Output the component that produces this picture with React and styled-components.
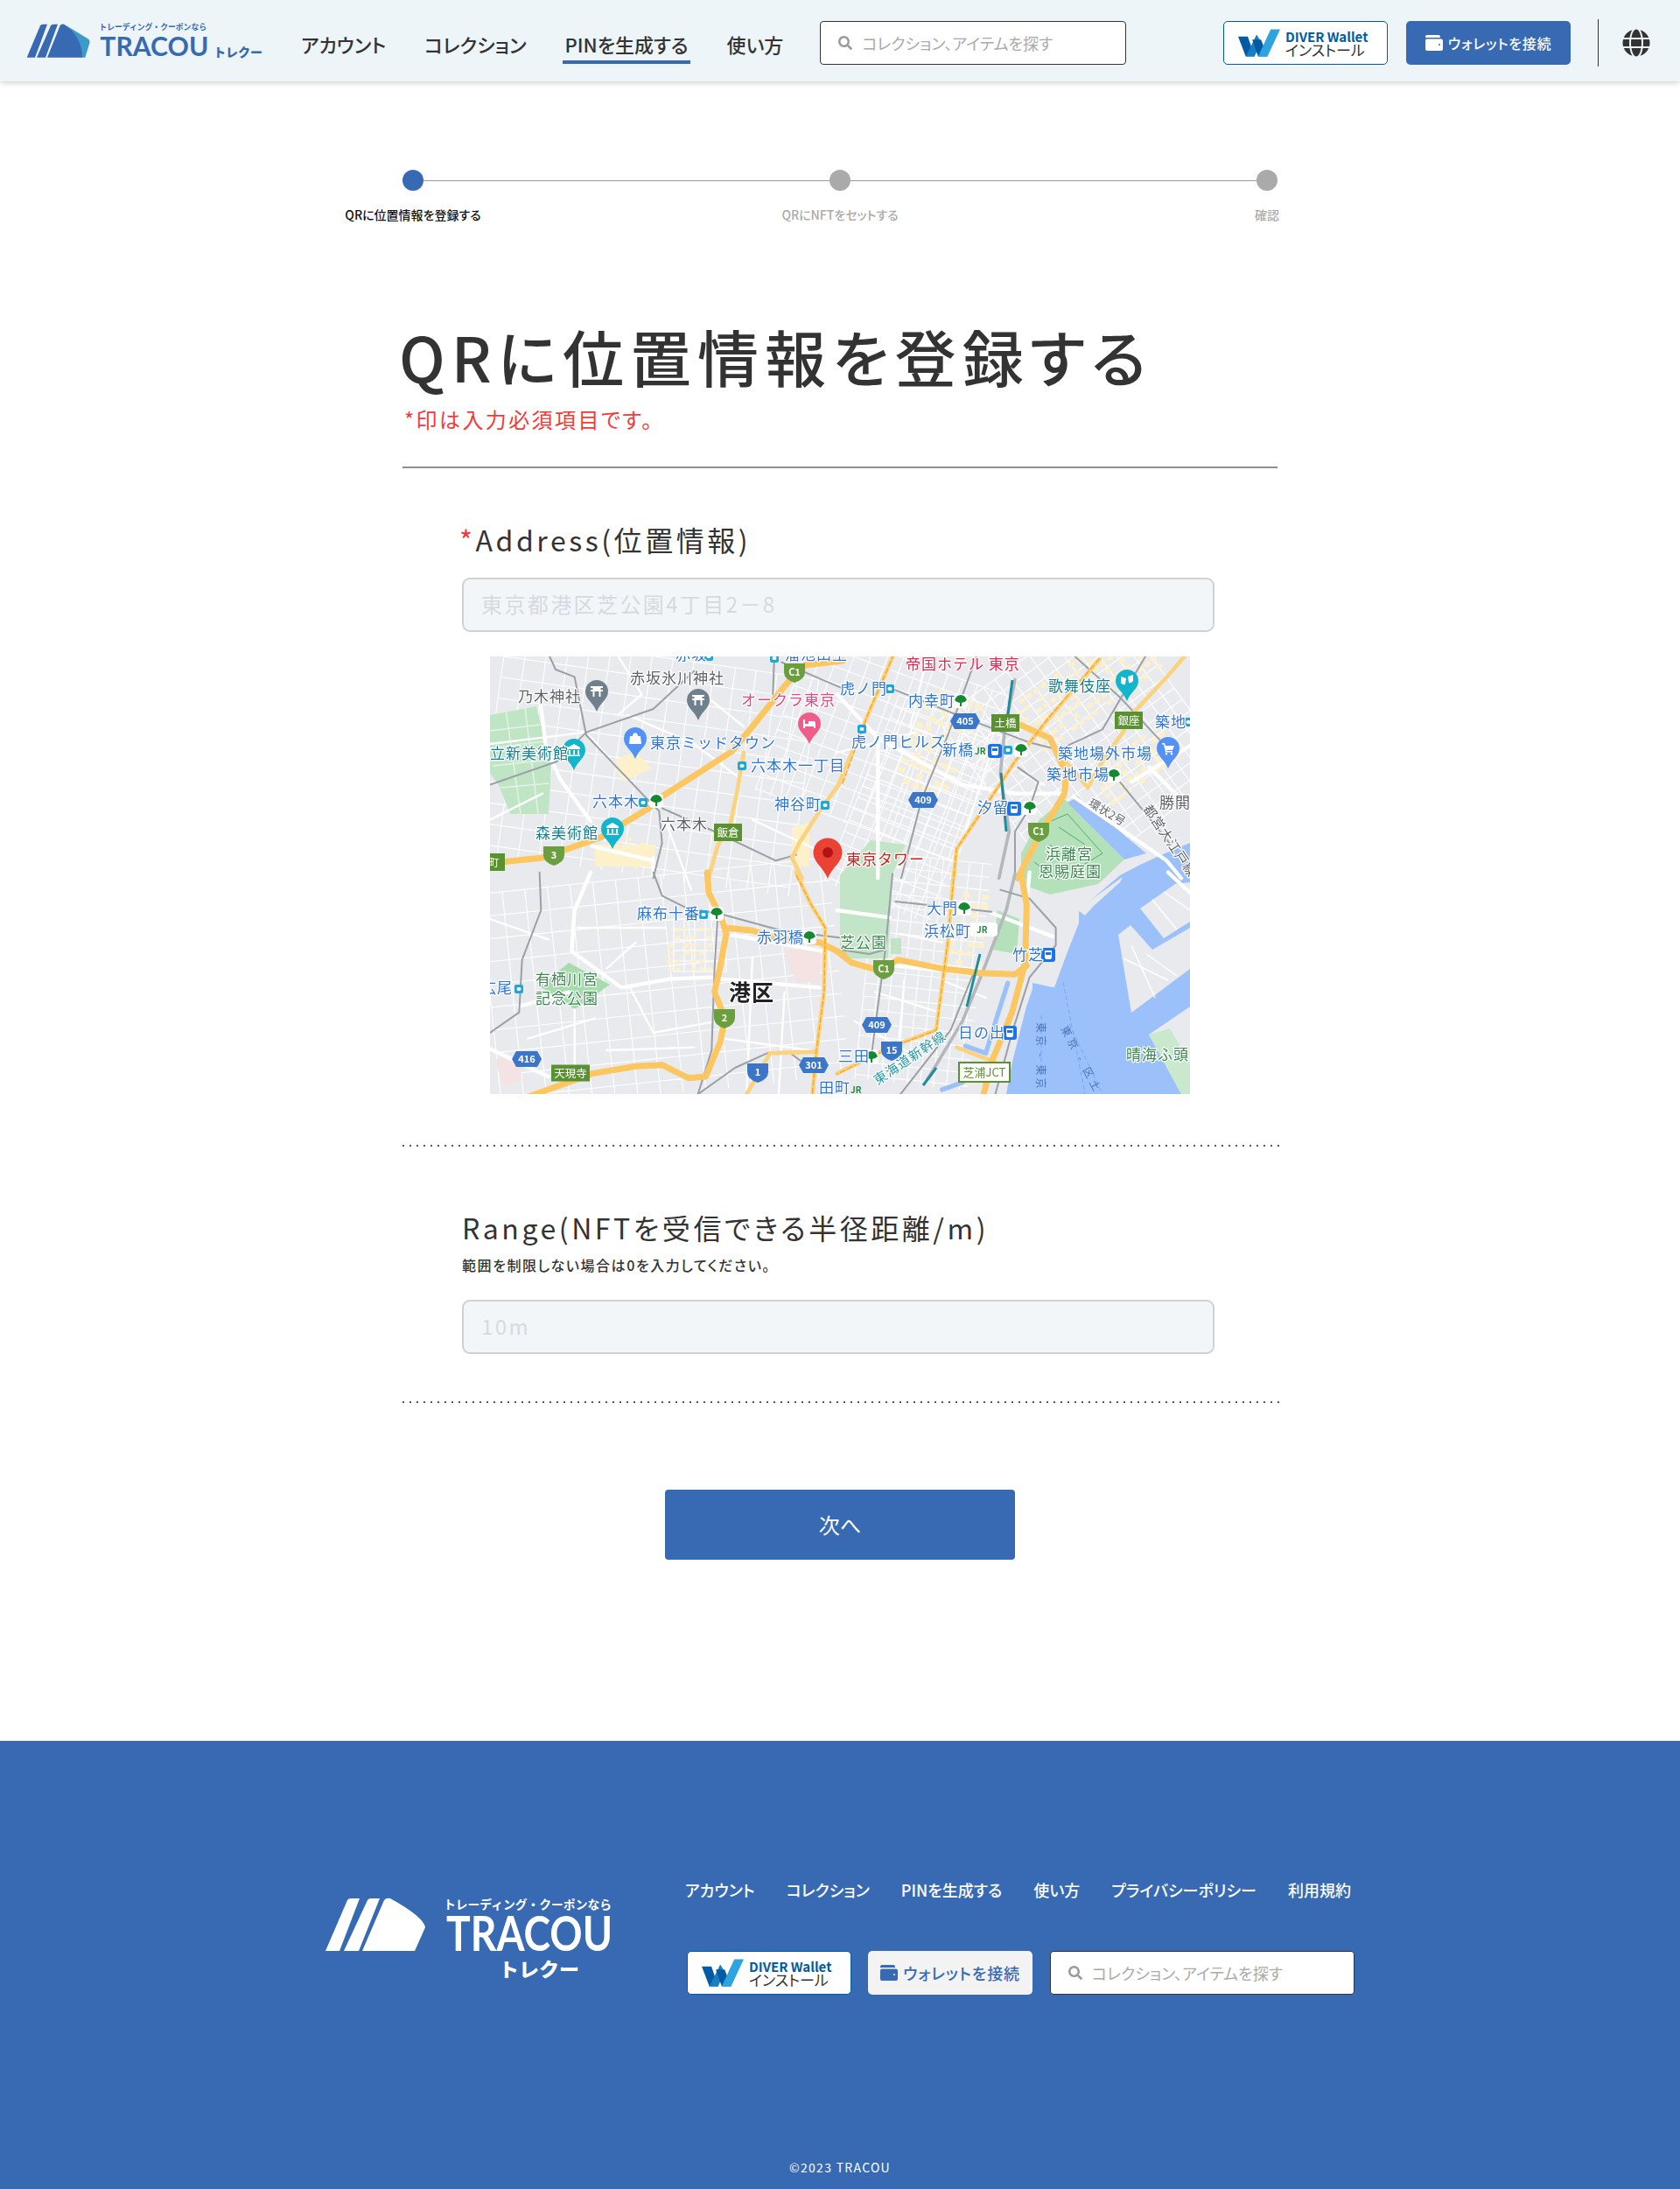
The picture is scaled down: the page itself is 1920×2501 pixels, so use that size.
import React from "react";
import styled, { createGlobalStyle } from "styled-components";
import { FaGlobe, FaSearch } from "react-icons/fa";

const NAV = ["アカウント", "コレクション", "PINを生成する", "使い方"];
const FOOTER_NAV = [...NAV, "プライバシーポリシー", "利用規約"];
const SEARCH_TEXT = "コレクション、アイテムを探す";

const BLUE = "#386ab3";

/* ---------- logos ---------- */

const HeaderLogo = () => (
  <LogoSvg width="300" height="65" viewBox="0 0 900 195">
    <path d="M165 44 L240 90 Q250 96 247 106 L232 155 L218 155 C220 110 205 80 165 44Z" fill="#3b9ac9" />
    <path d="M32 155 L78 46 Q81 41 87 41 L102 41 L60 155Z" fill={BLUE} />
    <path d="M66 155 L114 46 Q117 41 123 41 L138 41 L96 155Z" fill={BLUE} />
    <path d="M102 155 L146 46 Q150 38 160 41 Q222 84 222 155Z" fill={BLUE} />
    <text x="280" y="60" fontSize="29" fontWeight="700" fill={BLUE} textLength="368" lengthAdjust="spacingAndGlyphs">
      トレーディング・クーポンなら
    </text>
    <text x="283" y="150" fontSize="92" fontWeight="700" fill={BLUE} textLength="372" lengthAdjust="spacingAndGlyphs" fontFamily="Lato">
      TRACOU
    </text>
    <text x="672" y="152" fontSize="42" fontWeight="900" fill={BLUE} textLength="168" lengthAdjust="spacingAndGlyphs">
      トレクー
    </text>
  </LogoSvg>
);

const FooterLogo = () => (
  <LogoSvg width="330" height="100" viewBox="0 0 330 100">
    <g fill="#fff">
      <path d="M0 65 L25 7 Q26 5 29 5 L39 5 L16 65Z" />
      <path d="M21 65 L48 7 Q49 5 52 5 L62 5 L38 65Z" />
      <path d="M42 65 L67 7 Q69 4 74 5 Q112 26 114 38 L102 65Z" />
      <text x="135" y="17" fontSize="14" fontWeight="700" textLength="192" lengthAdjust="spacingAndGlyphs">
        トレーディング・クーポンなら
      </text>
      <text x="138" y="65" fontSize="56" fontWeight="700" textLength="190" lengthAdjust="spacingAndGlyphs" fontFamily="Lato">
        TRACOU
      </text>
      <text x="198" y="94" fontSize="22" fontWeight="900" textLength="92" lengthAdjust="spacingAndGlyphs">
        トレクー
      </text>
    </g>
  </LogoSvg>
);

const DiverMark = () => (
  <svg width="48" height="32" viewBox="0 0 143 93">
    <path d="M0 25 H33 L56 93 H26Z" fill="#005ba4" />
    <path d="M26 93 H56 L78 43 L63 18Z" fill="#1a7cc1" />
    <path d="M48 35 H78 L100 93 H68Z" fill="#005ba4" />
    <path d="M68 93 H100 L143 0 H111Z" fill="#2ea3e0" />
  </svg>
);

const WalletIcon = () => (
  <svg width="20" height="18" viewBox="0 0 20 18" fill="currentColor">
    <path d="M2 0h13a2 2 0 0 1 2 2v1H0V2a2 2 0 0 1 2-2Z" />
    <path
      fillRule="evenodd"
      d="M2 4.5h16a2 2 0 0 1 2 2V16a2 2 0 0 1-2 2H2a2 2 0 0 1-2-2V6.5a2 2 0 0 1 2-2Z M15 11a1 1 0 1 0 2 0 1 1 0 1 0-2 0Z"
    />
  </svg>
);

/* ---------- map ---------- */

// roads are written in 3x coordinates of each quarter of the map
const ROADS = {
  main: { stroke: "#fff", w: 13 },
  side: { stroke: "#fff", w: 7 },
  hw: { stroke: "#fcc660", w: 21 },
  gold: { stroke: "#fbd27e", w: 14 },
  rail: { stroke: "#9aa0a6", w: 6 },
  track: { stroke: "#b4b8bc", w: 11 },
  canal: { stroke: "#9cc0f9", w: 16 },
};

const QUARTERS = [
  {
    at: [0, 0],
    roads: [
      ["main", "M170 130 L190 300 L240 420 L345 565"],
      ["main", "M560 690 L560 750"],
      ["main", "M350 650 L560 700"],
      ["side", "M0 300 L330 260 M340 270 L470 420 M700 300 L860 420 M470 200 L700 300 M600 560 L690 800"],
      ["side", "M0 560 L180 470 M720 120 L870 240 M440 0 L520 130 L440 200 M900 560 L1200 700"],
      ["rail", "M200 -10 L225 45 L290 70 L330 270 L540 490 L580 530 L590 640 L560 760"],
      ["rail", "M0 440 L230 360 L330 260 L560 180 L700 50"],
      ["rail", "M590 520 L770 600 L980 700 L1050 680"],
      ["rail", "M975 -5 L970 130 M1000 20 L1210 110"],
      ["gold", "M1210 420 L1130 530 L1060 640 L1035 690 L1070 760"],
      ["gold", "M870 330 L850 450 L825 570 L780 650 L750 760"],
      ["hw", "M-10 710 L180 690 L380 620 L545 520 L590 480 L830 325 L900 240 L1020 90 L1080 30 L1210 15"],
    ],
  },
  {
    at: [400, 0],
    roads: [
      ["main", "M-10 130 L130 280 L420 440 L600 470 L780 470"],
      ["main", "M800 480 L1120 700 L1170 760"],
      ["main", "M130 300 L130 760 M1000 430 L1210 300 M1060 380 L1210 530"],
      ["side", "M-10 330 L260 260 M300 0 L240 240 M520 320 L380 760 M620 400 L700 440"],
      ["track", "M600 80 L565 250 L550 400 L580 600 L545 760"],
      ["rail", "M470 -5 L370 270 L280 490 L210 760"],
      ["rail", "M190 115 L400 200 L650 295 L750 320 L900 250 L1050 -5"],
      ["rail", "M800 -5 L960 140 L1100 290 M960 430 L1130 640"],
      ["rail", "M610 380 L680 430 L650 520 L600 600 L600 760"],
      ["gold", "M185 -10 L100 190 L-10 450"],
      ["gold", "M890 10 L710 220 L600 360 L500 510 L400 660 L390 760"],
      ["gold", "M740 320 L850 450 L900 360 L970 260 L1000 200 L1130 60 L1185 -5"],
      ["hw", "M620 235 L720 280 L775 400 L770 470 L680 620 L610 760"],
    ],
  },
  {
    at: [0, 250],
    roads: [
      ["main", "M345 -10 L290 120 L280 260 L450 385 L620 355 L760 350"],
      ["main", "M790 355 L1130 385 M830 205 L1140 260 M-10 590 L200 690 M100 450 L270 400"],
      ["side", "M0 150 L200 220 M300 180 L600 180 M480 385 L560 540 M560 540 L780 500 M130 560 L360 490 M500 230 L400 320"],
      ["side", "M900 280 L880 750 M1010 400 L990 750 M800 560 L1100 600 M400 600 L700 590 M290 680 L290 460"],
      ["rail", "M170 -10 L175 120 L110 290 L100 470 L0 540"],
      ["rail", "M560 -10 L590 70 L680 115 L780 130 L1000 190 L1210 215"],
      ["rail", "M780 150 L770 320 L760 600 L710 760 M700 760 L840 660 L950 610 L1030 610 L1070 640"],
      ["gold", "M1050 -10 L1100 100 L1150 180 L1145 400 L1120 600 L1105 760"],
      ["gold", "M960 610 L1120 605 M960 610 L880 750"],
      ["hw", "M745 -10 L750 60 L795 150 L810 200 L790 310 L770 400 L805 490 L790 570 L740 690 L680 695 L590 650 L500 655 L350 680 L130 760"],
      ["hw", "M810 180 L900 190 L1000 220 L1130 230 L1210 270"],
    ],
  },
  {
    at: [400, 250],
    roads: [
      ["main", "M-10 120 L170 145 M190 310 L480 340 M520 130 L730 210 M650 -10 L640 100"],
      ["side", "M200 200 L350 230 M120 400 L340 470 M50 500 L260 620 M350 360 L500 420 M220 360 L200 650"],
      ["main", "M1125 -10 L1200 60"],
      ["canal", "M575 370 L540 480 L500 610 L430 585 M420 710 L350 735"],
      ["track", "M600 -5 L570 120 L490 330 L420 500 L300 700"],
      ["rail", "M180 -5 L155 260 L110 600"],
      ["rail", "M190 90 L520 125 M550 50 L650 80 L740 180 L740 240 L650 350 L590 540 L530 760"],
      ["rail", "M0 255 L100 270 L155 255 M460 330 L380 530 L200 760"],
      ["gold", "M390 -10 L370 230 L330 530 L170 590 L-10 680"],
      ["gold", "M400 590 L530 640"],
      ["hw", "M-10 260 L40 300 L130 325 L200 290 L350 320 L480 335 L600 340 L640 310"],
      ["hw", "M620 -10 L640 100 L635 300 L590 470 L520 640 L490 760"],
    ],
  },
];

const GRIDS = [
  [0, 0, 360, 250, 24, 8],
  [0, 250, 400, 250, 26, -6],
  [330, 0, 240, 200, 18, 20],
  [420, 60, 130, 230, 14, 22],
  [430, 230, 130, 260, 15, 6],
  [560, -20, 240, 240, 16, -36],
  [210, 300, 60, 60, 12, 0],
];

const YELLOW_BLOCKS = [
  [203, 310, 54, 50, 9, 0],
  [600, 0, 170, 70, 10, -36],
  [480, 40, 60, 120, 11, 22],
  [525, 270, 35, 90, 11, 6],
  [690, 100, 100, 50, 10, -36],
  [150, 210, 30, 30, 9, 20],
  [420, 250, 32, 40, 10, 6],
];

const Lines = ({ x, y, w, h, s, r }) => {
  const items = [];
  for (let i = x; i <= x + w; i += s) items.push(<line key={`v${i}`} x1={i} y1={y} x2={i} y2={y + h} />);
  for (let j = y; j <= y + h; j += s) items.push(<line key={`h${j}`} x1={x} y1={j} x2={x + w} y2={j} />);
  return <g transform={`rotate(${r} ${x + w / 2} ${y + h / 2})`}>{items}</g>;
};

const Blocks = ({ x, y, w, h, s, r }) => {
  const items = [];
  for (let i = x; i < x + w; i += s)
    for (let j = y; j < y + h; j += s)
      if ((i + j * 3) % 7 < 5) items.push(<rect key={`${i}-${j}`} x={i} y={j} width={s - 3} height={s - 5} />);
  return <g transform={`rotate(${r} ${x + w / 2} ${y + h / 2})`}>{items}</g>;
};

const teardrop = (r, h) =>
  `M0 ${h} C${-r * 0.3} ${h * 0.55} ${-r} ${r * 0.7} ${-r} 0 A${r} ${r} 0 1 1 ${r} 0 C${r} ${r * 0.7} ${r * 0.3} ${h * 0.55} 0 ${h}Z`;

const PIN_ICONS = {
  torii: <path d="M-7 -6 H7 V-4 H4.5 V-2 H7 V0 H4.5 V6 H2.5 V0 H-2.5 V6 H-4.5 V0 H-7 V-2 H-4.5 V-4 H-7Z" fill="#fff" />,
  museum: <path d="M0 -7 L7 -3 V-1 H-7 V-3Z M-6 0 H-4 V5 H-6Z M-1 0 H1 V5 H-1Z M4 0 H6 V5 H4Z M-7 5.5 H7 V7 H-7Z" fill="#fff" />,
  bag: <path d="M-6 -3 H-3 C-3 -8 3 -8 3 -3 H6 L7 6 H-7Z" fill="#fff" />,
  bed: <path d="M-7 -5 H-5 V0 H-1 V-3 H5 Q7 -3 7 0 V5 H5 V3 H-5 V5 H-7Z" fill="#fff" />,
  mask: <path d="M-7 -5 L-1 -3 L-2 4 Q-5 5 -7 2Z M1 -5 L7 -7 L7 0 Q5 3 2 2Z" fill="#fff" />,
  cart: <path d="M-7 -6 H-4 L-3 -3 H7 L5 2 H-2 L-1 3 H5 V4.5 H-3 L-5 -4.5 H-7Z M-2 5 a1.3 1.3 0 1 0 .01 0Z M4 5 a1.3 1.3 0 1 0 .01 0Z" fill="#fff" />,
};

const PINS = [
  [122, 40, "#6f7f8c", "torii"],
  [238, 50, "#6f7f8c", "torii"],
  [365, 77, "#ef5d8a", "bed"],
  [166, 94, "#5491f5", "bag"],
  [96, 107, "#12b5cb", "museum"],
  [140, 197, "#12b5cb", "museum"],
  [728, 28, "#12b5cb", "mask"],
  [775, 105, "#5491f5", "cart"],
];

const TREES = [
  [190, 165], [538, 51], [607, 107], [713, 136], [617, 173], [259, 294], [365, 321], [542, 288], [436, 458],
];

const METRO = [
  [175, 167], [383, 170], [288, 125], [457, 37], [425, 83], [592, 107], [244, 295], [33, 380], [798, 75], [250, 0], [325, 2],
];

const STATIONS = [[577, 108], [599, 174], [638, 341], [594, 430]];

const SHIELDS = [
  [348, 18, "C1", "#6a9e3f"],
  [627, 200, "C1", "#6a9e3f"],
  [450, 357, "C1", "#6a9e3f"],
  [73, 227, "3", "#6a9e3f"],
  [268, 413, "2", "#6a9e3f"],
  [459, 450, "15", "#3b76c9"],
  [306, 475, "1", "#3b76c9"],
];

const HEXES = [
  [543, 74, "405"], [495, 164, "409"], [442, 421, "409"], [42, 460, "416"], [370, 467, "301"],
];

const TAGS = [
  [272, 201, 32, 20, "飯倉"], [589, 76, 32, 20, "土橋"], [730, 73, 32, 20, "銀座"], [4, 235, 26, 20, "町"], [92, 476, 44, 19, "天現寺"],
];

const C = {
  transit: "#2f74d8",
  teal: "#12808f",
  gray: "#5f6368",
  pink: "#e8467c",
  red: "#c5221f",
  green: "#3a8a4e",
};

const LABELS = [
  ["赤坂", 212, 4, C.transit],
  ["溜池山王", 337, 4, C.transit],
  ["赤坂氷川神社", 160, 31, C.gray],
  ["乃木神社", 32, 52, C.gray],
  ["オークラ東京", 287, 56, C.pink],
  ["東京ミッドタウン", 183, 105, C.transit],
  ["立新美術館", 0, 117, C.teal],
  ["六本木一丁目", 298, 131, C.transit],
  ["六本木", 117, 172, C.transit],
  ["神谷町", 325, 175, C.transit],
  ["六本木", 195, 198, C.gray],
  ["森美術館", 52, 208, C.teal],
  ["虎ノ門", 400, 43, C.transit],
  ["帝国ホテル 東京", 475, 15, "#e8254f"],
  ["内幸町", 478, 57, C.transit],
  ["歌舞伎座", 638, 40, C.teal],
  ["築地", 760, 81, C.transit],
  ["虎ノ門ヒルズ", 413, 104, C.transit],
  ["新橋", 517, 113, C.transit],
  ["築地場外市場", 649, 117, C.transit],
  ["築地市場", 636, 141, C.transit],
  ["汐留", 557, 179, C.transit],
  ["勝閧", 765, 173, C.gray],
  ["浜離宮", 635, 232, C.green],
  ["恩賜庭園", 627, 252, C.green],
  ["東京タワー", 407, 238, C.red],
  ["麻布十番", 168, 300, C.transit],
  ["赤羽橋", 305, 327, C.transit],
  ["有栖川宮", 52, 375, C.green],
  ["記念公園", 52, 397, C.green],
  ["広尾", -10, 385, C.transit],
  ["田町", 376, 499, C.transit],
  ["大門", 499, 294, C.transit],
  ["浜松町", 496, 320, C.transit],
  ["芝公園", 400, 333, C.green],
  ["竹芝", 597, 347, C.transit],
  ["三田", 398, 463, C.transit],
  ["日の出", 535, 436, C.transit],
  ["晴海ふ頭", 727, 461, C.green],
];

const MapDrawing = () => (
  <MapSvg viewBox="0 0 800 500" width="800" height="500">
    <rect width="800" height="500" fill="#e8eaed" />

    <g stroke="#fff" strokeWidth="1.1">
      {GRIDS.map(([x, y, w, h, s, r], i) => (
        <Lines key={i} x={x} y={y} w={w} h={h} s={s} r={r} />
      ))}
    </g>

    <g fill="#fdf1cb">
      <path d="M143 117 L167 110 L185 128 L153 143 L143 130Z" />
      <path d="M120 215 L190 215 L185 240 L120 240Z" />
      <path d="M345 195 L365 190 L365 240 L345 240Z" />
      {YELLOW_BLOCKS.map(([x, y, w, h, s, r], i) => (
        <Blocks key={i} x={x} y={y} w={w} h={h} s={s} r={r} />
      ))}
    </g>

    <path d="M0 67 L53 57 L70 127 L67 180 L23 180 L10 147 L0 133Z" fill="#bfe5c4" />
    <g stroke="#e3f3e5" strokeWidth="1.5">
      <path d="M0 85 L57 78 M0 105 L62 97 M3 125 L68 118 M12 150 L67 145 M18 60 L35 180 M40 58 L55 180" />
    </g>
    <path d="M90 350 L137 375 L97 403 L57 377Z" fill="#a7dcae" />
    <path d="M400 250 L460 250 L455 345 L400 345Z M400 250 L435 210 L475 215 L460 250Z" fill="#c1e5c6" />
    <rect x="458" y="322" width="12" height="18" fill="#bfe3c4" />
    <path d="M335 335 L377 335 L377 372 L350 372Z" fill="#f5e3e3" />
    <path d="M5 460 L37 460 L35 485 L15 490Z" fill="#f5e3e3" />
    <path d="M607 225 L627 187 L657 163 L725 232 L695 260 L640 272 L607 260Z" fill="#b4e0ba" />
    <path d="M580 290 L605 300 L602 340 L575 335Z" fill="#b4e0ba" />
    <g stroke="#4db06a" strokeWidth="1" fill="none">
      <path d="M625 195 L660 180 L700 225 L650 255 L622 235 M650 195 L680 215 M640 215 L660 235" />
    </g>

    <path
      d="M800 213 L767 227 L743 238 L720 250 L673 290 L673 305 L643 378 L620 373 L620 380 L613 400 L597 463 L590 500 L800 500Z"
      fill="#9cc0f9"
    />
    <path d="M660 167 L725 232 L750 225 L672 160Z" fill="#9cc0f9" />
    <g fill="#e8eaed">
      <path d="M743 288 L783 260 L800 258 L800 303 L770 322Z" />
      <path d="M718 318 L732 307 L757 335 L800 310 L800 357 L733 407Z" />
      <path d="M753 432 L800 400 L800 500 L790 500Z" />
      <path d="M672 290 L687 278 L723 252 L720 258 L690 285 L680 296Z" />
      <path d="M640 310 L672 305 L645 378 L620 370Z" />
    </g>
    <path d="M753 432 L777 425 L800 465 L800 500 L790 500Z" fill="#c9e8cd" />
    <g stroke="#fff" strokeWidth="1.5">
      <path d="M757 278 L785 312 M770 269 L800 290 M724 345 L775 370 M733 330 L760 390 M750 340 L785 365" />
    </g>
    <path d="M630 410 L630 480 M655 372 L680 500 M662 420 L700 500" stroke="#7ba6ef" strokeWidth="1" strokeDasharray="5 3" fill="none" />

    {QUARTERS.map(({ at, roads }, i) => (
      <g key={i} transform={`translate(${at[0]} ${at[1]}) scale(0.3333)`} fill="none" strokeLinecap="round" strokeLinejoin="round">
        {roads.map(([kind, d], j) => (
          <path key={j} d={d} stroke={ROADS[kind].stroke} strokeWidth={ROADS[kind].w} />
        ))}
      </g>
    ))}
    <g fill="none" strokeLinecap="round" strokeDasharray="6 3" stroke="#f5a623" strokeWidth="1.3">
      <path d="M403 145 L433 63 L462 -3 M696 3 L636 73 L600 120 L567 170 L533 220 L530 253 L523 327 L510 427 L457 447 L397 477" />
      <path d="M350 250 L367 283 L383 310 L382 383 L373 450 L368 503" />
    </g>
    <path d="M597 27 L590 80 M584 133 L590 200 M560 340 L545 400 M510 470 L495 490" stroke="#1f8d9c" strokeWidth="3" fill="none" />

    {TREES.map(([x, y], i) => (
      <g key={i} transform={`translate(${x} ${y})`}>
        <rect x="-8" y="-8" width="16" height="16" rx="4" fill="#fff" />
        <path d="M-7 -1 Q-5 -7 0 -7 Q5 -7 7 -1 Q4 2 1 2 V6 H-1 V2 Q-4 2 -7 -1Z" fill="#15892f" />
      </g>
    ))}
    {METRO.map(([x, y], i) => (
      <g key={i}>
        <rect x={x - 5} y={y - 5} width="10" height="10" rx="2" fill="#1fa6d8" />
        <rect x={x - 2.5} y={y - 2} width="5" height="4" rx="2" fill="#fff" />
      </g>
    ))}
    {STATIONS.map(([x, y], i) => (
      <g key={i}>
        <rect x={x - 8} y={y - 8} width="16" height="16" rx="3" fill="#1a73e8" />
        <path d={`M${x - 4} ${y - 5} h8 v8 l-1 2 h-6 l-1 -2Z`} fill="#fff" />
        <path d={`M${x - 3} ${y - 3} h6 v3 h-6Z`} fill="#1a73e8" />
      </g>
    ))}
    {SHIELDS.map(([x, y, t, c], i) => (
      <g key={i} transform={`translate(${x} ${y})`}>
        <path d="M-12 -10 H12 V0 Q12 8 0 12 Q-12 8 -12 0Z" fill={c} />
        <text y="4" textAnchor="middle" fill="#fff" fontSize="11" fontWeight="700">
          {t}
        </text>
      </g>
    ))}
    {HEXES.map(([x, y, t], i) => (
      <g key={i} transform={`translate(${x} ${y})`}>
        <path d="M-17 0 L-12 -9 H12 L17 0 L12 9 H-12Z" fill="#3b76c9" />
        <text y="4" textAnchor="middle" fill="#fff" fontSize="11" fontWeight="700">
          {t}
        </text>
      </g>
    ))}
    {TAGS.map(([x, y, w, h, t], i) => (
      <g key={i}>
        <rect x={x - w / 2} y={y - h / 2} width={w} height={h} fill="#5b9231" />
        <text x={x} y={y + 4.5} textAnchor="middle" fill="#fff" fontSize="12.5">
          {t}
        </text>
      </g>
    ))}
    <rect x="536" y="464" width="58" height="22" fill="#fff" stroke="#5b9231" strokeWidth="2" />
    <text x="565" y="480" textAnchor="middle" fontSize="13" fill="#5b9231">
      芝浦JCT
    </text>
    <rect x="548" y="304" width="32" height="16" rx="4" fill="#fff" />
    <text x="556" y="316" fontSize="10" fontWeight="700" fill="#1e8e3e">
      JR
    </text>
    <text x="554" y="112" fontSize="10" fontWeight="700" fill="#1e8e3e">
      JR
    </text>
    <text x="412" y="499" fontSize="10" fontWeight="700" fill="#1e8e3e">
      JR
    </text>

    {PINS.map(([x, y, c, icon], i) => (
      <g key={i} transform={`translate(${x} ${y})`}>
        <path d={teardrop(13, 23)} fill={c} />
        {PIN_ICONS[icon]}
      </g>
    ))}
    <g transform="translate(386 224)">
      <path d={teardrop(16.5, 30)} fill="#ea4335" />
      <circle r="6" fill="#b31412" />
    </g>

    <g stroke="#fff" strokeWidth="2.5">
      {LABELS.map(([t, x, y, c], i) => (
        <text key={i} x={x} y={y} fill={c} fontSize="17" letterSpacing="1">
          {t}
        </text>
      ))}
      <text x="273" y="393" fill="#202124" fontSize="25" fontWeight="700" letterSpacing="1">
        港区
      </text>
      <text transform="translate(443 490) rotate(-34)" fill="#2a97a8" fontSize="15" letterSpacing="1">
        東海道新幹線
      </text>
      <text transform="translate(683 170) rotate(31)" fill={C.gray} fontSize="13">
        環状2号
      </text>
      <text transform="translate(746 174) rotate(56)" fill={C.gray} fontSize="15" letterSpacing="1">
        都営大江戸線
      </text>
    </g>
    <text transform="translate(625 418) rotate(90)" fill="#4a74b8" fontSize="12" letterSpacing="3">
      東京 - 東京
    </text>
    <text transform="translate(652 425) rotate(62)" fill="#4a74b8" fontSize="12" letterSpacing="4">
      東京 - 区土
    </text>
  </MapSvg>
);

/* ---------- parts shared by header and footer ---------- */

const SearchBox = ({ width }) => (
  <SearchWrap $width={width}>
    <FaSearch size={16} color="#9c9c9c" />
    <SearchInput placeholder={SEARCH_TEXT} />
  </SearchWrap>
);

const DiverButton = () => (
  <DiverBtn>
    <DiverMark />
    <DiverText>
      <strong>DIVER Wallet</strong>
      <span>インストール</span>
    </DiverText>
  </DiverBtn>
);

const WalletButton = ({ light }) => (
  <WalletBtn $light={light}>
    <WalletIcon />
    ウォレットを接続
  </WalletBtn>
);

/* ---------- page ---------- */

export default function App() {
  return (
    <Page>
      <GlobalStyle />
      <Header>
        <HeaderLogo />
        <HeaderNav>
          {NAV.map((item) => (
            <NavLink key={item} $active={item === "PINを生成する"}>
              {item}
            </NavLink>
          ))}
        </HeaderNav>
        <SearchBox width="350px" />
        <HeaderRight>
          <DiverButton />
          <WalletButton />
          <Separator />
          <FaGlobe size={32} color="#333" />
        </HeaderRight>
      </Header>

      <Main>
        <Stepper>
          <Step>
            <Dot $active />
            <StepLabel $active>QRに位置情報を登録する</StepLabel>
          </Step>
          <Connector />
          <Step>
            <Dot />
            <StepLabel>QRにNFTをセットする</StepLabel>
          </Step>
          <Connector />
          <Step>
            <Dot />
            <StepLabel>確認</StepLabel>
          </Step>
        </Stepper>

        <Title>QRに位置情報を登録する</Title>
        <Required>*印は入力必須項目です。</Required>
        <Rule />

        <Field>
          <FieldLabel>
            <em>*</em>Address(位置情報)
          </FieldLabel>
          <TextInput placeholder="東京都港区芝公園4丁目2－8" />
          <MapFrame>
            <MapDrawing />
          </MapFrame>
        </Field>
        <DottedRule />

        <RangeField>
          <FieldLabel>Range(NFTを受信できる半径距離/m)</FieldLabel>
          <Hint>範囲を制限しない場合は0を入力してください。</Hint>
          <TextInput placeholder="10m" />
        </RangeField>
        <DottedRule />

        <NextButton>次へ</NextButton>
      </Main>

      <Footer>
        <FooterInner>
          <FooterLogo />
          <FooterRight>
            <FooterNav>
              {FOOTER_NAV.map((item) => (
                <FooterLink key={item}>{item}</FooterLink>
              ))}
            </FooterNav>
            <FooterActions>
              <DiverButton />
              <WalletButton light />
              <SearchBox width="348px" />
            </FooterActions>
          </FooterRight>
        </FooterInner>
        <Copyright>©2023 TRACOU</Copyright>
      </Footer>
    </Page>
  );
}

const GlobalStyle = createGlobalStyle`
  body {
    margin: 0;
    background: #fff;
    color: #333;
    font-family: "Noto Sans CJK JP", "Noto Sans", sans-serif;
    font-feature-settings: "palt" 1;
  }
  input, button {
    font-family: inherit;
    font-feature-settings: inherit;
  }
`;

const Page = styled.div`
  width: 1920px;
  height: 2501px;
  display: flex;
  flex-direction: column;
  overflow: hidden;
`;

const LogoSvg = styled.svg`
  flex-shrink: 0;
  font-family: "Noto Sans CJK JP", sans-serif;
  font-feature-settings: normal;
`;

const Header = styled.header`
  height: 93px;
  box-sizing: border-box;
  padding: 5px 34px 0 20px;
  display: flex;
  align-items: center;
  flex-shrink: 0;
  background: #edf5f9;
  box-shadow: 0 2px 6px rgba(0, 0, 0, 0.18);
  ${LogoSvg} {
    margin-top: -5px;
  }
`;

const HeaderNav = styled.nav`
  margin-left: 22px;
  display: flex;
  gap: 40px;
`;

const NavLink = styled.a`
  height: 46px;
  margin-top: 2px;
  box-sizing: border-box;
  padding: 3px 2px 0;
  display: flex;
  align-items: center;
  font-size: 22px;
  font-weight: 500;
  color: #333;
  white-space: nowrap;
  border-bottom: 4px solid ${(p) => (p.$active ? "#386ab3" : "transparent")};
`;

const SearchWrap = styled.div`
  width: ${(p) => p.$width};
  height: 50px;
  box-sizing: border-box;
  padding-left: 20px;
  display: flex;
  align-items: center;
  gap: 9px;
  background: #fff;
  border: 1px solid #333;
  border-radius: 4px;
  ${Header} & {
    margin-left: 40px;
  }
`;

const SearchInput = styled.input`
  flex: 1;
  min-width: 0;
  border: 0;
  outline: 0;
  background: none;
  font-size: 18px;
  &::placeholder {
    color: #aaa;
    opacity: 1;
  }
`;

const HeaderRight = styled.div`
  margin-left: auto;
  display: flex;
  align-items: center;
`;

const DiverBtn = styled.button`
  width: 188px;
  height: 50px;
  padding: 0 0 0 16px;
  display: flex;
  align-items: center;
  gap: 6px;
  background: #fff;
  border: 1px solid #005ba4;
  border-radius: 5px;
  box-sizing: border-box;
`;

const DiverText = styled.span`
  display: flex;
  flex-direction: column;
  align-items: flex-start;
  line-height: 15px;
  strong {
    font-size: 15px;
    font-weight: 700;
    color: #005ba4;
  }
  span {
    font-size: 17px;
    color: #333;
  }
`;

const WalletBtn = styled.button`
  width: 188px;
  height: 50px;
  margin-left: ${(p) => (p.$light ? "19px" : "21px")};
  padding: 0;
  display: flex;
  align-items: center;
  justify-content: center;
  gap: 6px;
  border: 0;
  border-radius: 5px;
  background: ${(p) => (p.$light ? "#f3f3f3" : "#386ab3")};
  color: ${(p) => (p.$light ? "#386ab3" : "#fff")};
  font-size: ${(p) => (p.$light ? "18px" : "16px")};
  letter-spacing: ${(p) => (p.$light ? "0.9px" : "0.7px")};
  font-weight: 500;
  white-space: nowrap;
`;

const Separator = styled.div`
  width: 1px;
  height: 54px;
  margin: 0 27px 0 31px;
  background: #333;
`;

const Main = styled.main`
  width: 1000px;
  margin: 0 auto;
  padding-top: 101px;
  flex-shrink: 0;
`;

const Stepper = styled.div`
  display: flex;
  align-items: flex-start;
`;

const Step = styled.div`
  width: 24px;
  display: flex;
  flex-direction: column;
  align-items: center;
  flex-shrink: 0;
`;

const Dot = styled.div`
  width: 24px;
  height: 24px;
  border-radius: 50%;
  background: ${(p) => (p.$active ? "#386ab3" : "#aaa")};
`;

const StepLabel = styled.div`
  margin: 17px 0 1px;
  font-size: 14px;
  line-height: 20px;
  font-weight: 500;
  white-space: nowrap;
  color: ${(p) => (p.$active ? "#111" : "#aaa")};
`;

const Connector = styled.div`
  flex: 1;
  height: 1px;
  margin-top: 12px;
  background: #999;
`;

const Title = styled.h1`
  margin: 111px 0 0 -4px;
  font-size: 70px;
  line-height: 80px;
  font-weight: 500;
  letter-spacing: 7px;
  color: #333;
  white-space: nowrap;
`;

const Required = styled.p`
  margin: 16px 0 0 2px;
  font-size: 24px;
  line-height: 32px;
  letter-spacing: 2.4px;
  color: #f13a3c;
`;

const Rule = styled.hr`
  margin: 38px 0 0;
  height: 2px;
  border: 0;
  background: #8f8f8f;
`;

const Field = styled.section`
  padding: 58px 0 58px 68px;
`;

const RangeField = styled(Field)`
  padding: 69px 0 54px 68px;
`;

const FieldLabel = styled.h2`
  margin: 0 0 21px;
  font-size: 32px;
  line-height: 46px;
  font-weight: 400;
  letter-spacing: 3.55px;
  color: #333;
  white-space: nowrap;
  em {
    font-style: normal;
    color: #f13a3c;
    margin-left: -3px;
  }
`;

const Hint = styled.p`
  margin: -13px 0 28px;
  font-size: 16px;
  line-height: 24px;
  font-weight: 500;
  letter-spacing: 1.55px;
`;

const TextInput = styled.input`
  display: block;
  width: 860px;
  height: 62px;
  box-sizing: border-box;
  padding: 0 20px 3px;
  background: #f3f6f9;
  border: 2px solid #cfd1d3;
  border-radius: 9px;
  font-size: 24px;
  font-feature-settings: normal;
  letter-spacing: 2.4px;
  outline: 0;
  &::placeholder {
    color: #d6dade;
    opacity: 1;
  }
`;

const MapFrame = styled.div`
  width: 800px;
  height: 500px;
  margin: 28px 0 0 32px;
  overflow: hidden;
`;

const MapSvg = styled.svg`
  display: block;
  filter: blur(0.4px);
  font-family: "Noto Sans CJK JP", sans-serif;
  font-feature-settings: normal;
  text {
    paint-order: stroke;
    stroke-linejoin: round;
  }
`;

const DottedRule = styled.div`
  width: 1003px;
  height: 2px;
  background-image: linear-gradient(to right, #555 2px, transparent 2px);
  background-size: 8px 2px;
`;

const NextButton = styled.button`
  display: block;
  width: 400px;
  height: 80px;
  margin: 99px auto 207px;
  padding-bottom: 3px;
  border: 0;
  border-radius: 4px;
  background: #386ab3;
  color: #fff;
  font-size: 24px;
`;

const Footer = styled.footer`
  flex: 1;
  min-height: 0;
  display: flex;
  flex-direction: column;
  background: #386ab3;
  color: #fff;
`;

const FooterInner = styled.div`
  width: 1176px;
  margin: 0 auto;
  padding-top: 158px;
  display: flex;
  justify-content: space-between;
  align-items: flex-start;
  ${LogoSvg} {
    margin-top: 17px;
  }
`;

const FooterRight = styled.div`
  width: 765px;
`;

const FooterNav = styled.nav`
  padding-right: 4px;
  display: flex;
  justify-content: space-between;
`;

const FooterLink = styled.a`
  font-size: 18px;
  line-height: 24px;
  font-weight: 500;
  color: #fff;
  white-space: nowrap;
`;

const FooterActions = styled.div`
  margin-top: 58px;
  padding-left: 2px;
  display: flex;
  ${SearchWrap} {
    margin-left: 20px;
  }
`;

const Copyright = styled.div`
  margin-top: auto;
  padding-bottom: 14px;
  text-align: center;
  font-size: 14px;
  line-height: 22px;
  letter-spacing: 1.3px;
`;
